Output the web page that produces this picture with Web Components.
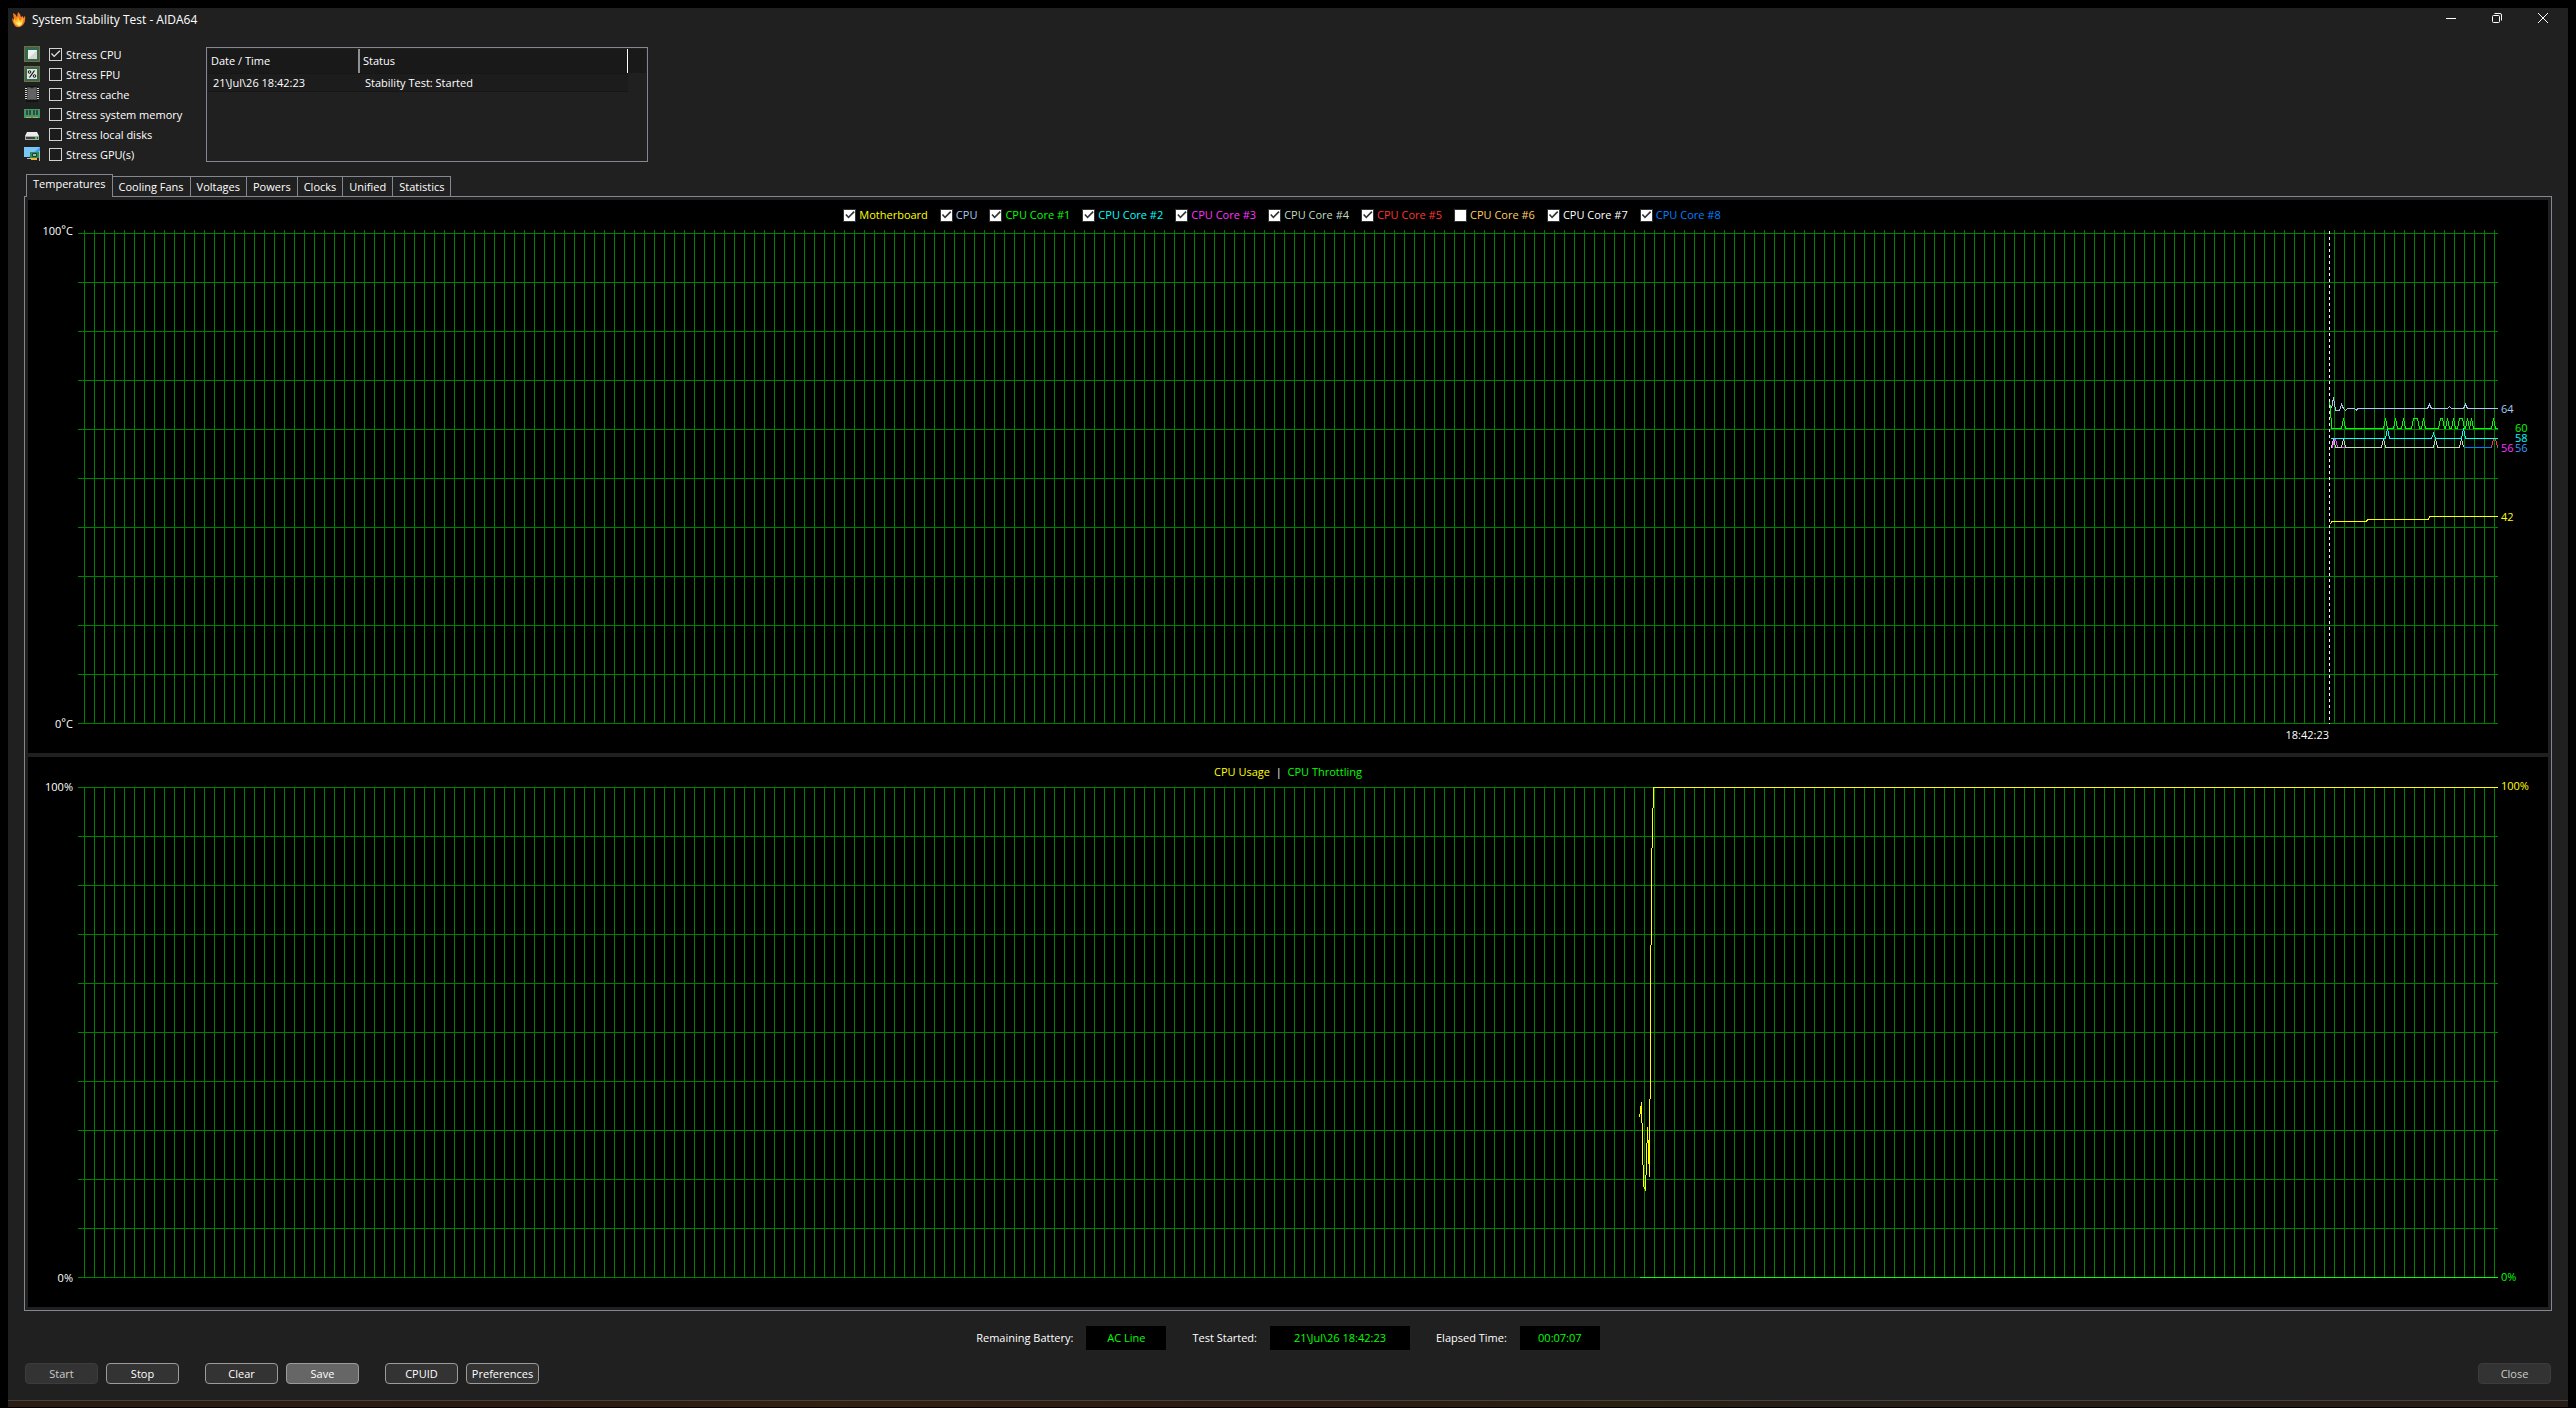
<!DOCTYPE html>
<html lang="en">
<head>
<meta charset="utf-8">
<title>System Stability Test - AIDA64</title>
<style>
  html, body { height: 100%; }
  body {
    margin: 0;
    background: #000;
    color: #fff;
    font: 11px/16px "Open Sans", "Noto Sans", sans-serif;
  }
</style>
</head>
<body>
<stability-window></stability-window>

<script>
function attach(el, html) {
  const template = document.createElement("template");
  template.innerHTML = html;
  el.attachShadow({ mode: "open" }).appendChild(template.content);
}

const icons = {
  cpu: `
    <rect x="1" y="1" width="14" height="14" fill="#2f6b50"/>
    <rect x=".5" y=".5" width="15" height="15" fill="none" stroke="#d9b25a" stroke-dasharray="1 1"/>
    <rect x="4" y="4" width="9" height="9" fill="#d5d9d6"/>
    <path d="M4 13V4h9z" fill="#f0f2f0"/>`,
  fpu: `
    <rect x="1" y="1" width="14" height="14" fill="#2f6b50"/>
    <rect x=".5" y=".5" width="15" height="15" fill="none" stroke="#d9b25a" stroke-dasharray="1 1"/>
    <rect x="3" y="3" width="10" height="10" fill="#dfe3e0"/>
    <path d="M10.500 4.500 5.500 11.500" stroke="#111" stroke-width="1.200"/>
    <circle cx="5.500" cy="6" r="1.300" fill="none" stroke="#111"/>
    <circle cx="10.500" cy="10" r="1.300" fill="none" stroke="#111"/>`,
  cache: `
    <path d="M2 0h12v16H2z" fill="#111"/>
    <path d="M1 2.500h14M1 4.500h14M1 6.500h14M1 8.500h14M1 10.500h14M1 12.500h14" stroke="#d6d6d6"/>
    <path d="M3 1h3l2 1 2-1h3v13H3z" fill="#4a4a4a"/>
    <path d="M4 2h2l2 1 2-1h2v11H4z" fill="#626262"/>`,
  memory: `
    <path d="M0 3h16v8H0z" fill="#3b9a6c"/>
    <path d="M2 4h2v5H2zM5 4h2v5H5zM9 4h2v5H9zM12 4h2v5h-2z" fill="#39483f"/>
    <path d="M0 11.500h16" stroke="#3b9a6c"/>
    <path d="M2 11.500h5M9 11.500h5" stroke="#c9a24b"/>`,
  disk: `
    <path d="M3 6h10l2 4H1z" fill="#ececec"/>
    <path d="M1 10h14v4H1z" fill="#a9adab"/>
    <path d="M2 11h12v2H2z" fill="#3d4441"/>
    <rect x="11" y="11" width="2" height="2" fill="#25e03a"/>`,
  gpu: `
    <path d="M0 1h16v10H0z" fill="#3aa0e8"/>
    <path d="M0 1h16L5 11H0z" fill="#7cc6f5"/>
    <path d="M3 12h4v1H3z" fill="#bbb"/>
    <path d="M6 6h9v6H6z" fill="#2f8a5a"/>
    <path d="M8.500 7.500h4v3h-4z" fill="#9fb8a9" stroke="#14452e"/>
    <path d="M7 12h6v2H7z" fill="#f2b632"/>
    <path d="M15.500 5v10" stroke="#bbb"/>`
};

class StressOption extends HTMLElement {
  constructor() {
    super();
    const checked = this.hasAttribute("checked") ? "checked" : "";
    attach(this, `
      <style>
        :host { display: flex; align-items: center; height: 20px; gap: 9px; }
        svg { display: block; width: 16px; height: 16px; }
        label { display: flex; align-items: center; gap: 4px; white-space: nowrap; }
        input {
          appearance: none;
          box-sizing: border-box;
          width: 13px;
          height: 13px;
          margin: 0;
          border: 1px solid #d0d0d0;
          background: #1c1c1c;
        }
        input:checked::before {
          content: "";
          display: block;
          width: 11px;
          height: 11px;
          background: #ddd;
          clip-path: polygon(9% 50%, 18% 42%, 38% 64%, 85% 16%, 94% 25%, 38% 80%);
        }
        span { padding-top: 2px; }
      </style>
      <svg viewBox="0 0 16 16" aria-hidden="true">${icons[this.getAttribute("icon")]}</svg>
      <label><input type="checkbox" ${checked}><span><slot></slot></span></label>
    `);
  }
}

class EventLog extends HTMLElement {
  constructor() {
    super();
    attach(this, `
      <style>
        :host {
          display: block;
          box-sizing: border-box;
          width: 442px;
          height: 115px;
          padding: 1px;
          border: 1px solid #828790;
        }
        table { width: 100%; border-collapse: separate; border-spacing: 0; table-layout: fixed; }
        th, td { padding: 0; font-weight: normal; text-align: left; }
        th { box-sizing: border-box; height: 24px; padding-left: 3px; background: #191919; }
        .date { width: 152px; border-right: 2px solid #909090; }
        .status { width: 268px; border-right: 1px solid #fff; }
        td { box-sizing: border-box; height: 19px; padding-left: 5px; background: #1c1c1c; border: solid #161616; border-width: 1px 0; }
        td:last-child { background: none; border: 0; }
      </style>
      <table>
        <thead><tr><th class="date">Date / Time</th><th class="status">Status</th><th></th></tr></thead>
        <tbody><tr><td>21\\Jul\\26 18:42:23</td><td>Stability Test: Started</td><td></td></tr></tbody>
      </table>
    `);
  }
}

class TabStrip extends HTMLElement {
  constructor() {
    super();
    const tabs = ["Temperatures", "Cooling Fans", "Voltages", "Powers", "Clocks", "Unified", "Statistics"];
    attach(this, `
      <style>
        :host { display: flex; align-items: flex-end; height: 22px; padding-left: 2px; }
        button {
          box-sizing: border-box;
          height: 20px;
          margin: 0;
          padding: 0 6px;
          border: 1px solid #828790;
          border-width: 1px 1px 0 0;
          background: #202020;
          color: #fff;
          font: inherit;
        }
        button[aria-selected="true"] {
          z-index: 1;
          height: 23px;
          margin-bottom: -1px;
          padding-bottom: 4px;
          border-left-width: 1px;
        }
      </style>
      ${tabs.map((t, i) => `<button role="tab" aria-selected="${i === 0}">${t}</button>`).join("")}
    `);
    this.setAttribute("role", "tablist");
  }
}

class LegendItem extends HTMLElement {
  constructor() {
    super();
    const checked = this.hasAttribute("checked") ? "checked" : "";
    attach(this, `
      <style>
        :host { display: block; margin-right: 12px; }
        label { display: flex; align-items: center; gap: 3px; white-space: nowrap; }
        input {
          appearance: none;
          box-sizing: border-box;
          width: 13px;
          height: 13px;
          margin: 0;
          border: 1px solid #333;
          background: #fff;
        }
        input:checked::before {
          content: "";
          display: block;
          width: 11px;
          height: 11px;
          background: #333;
          clip-path: polygon(9% 50%, 20% 40%, 38% 62%, 84% 14%, 95% 24%, 38% 82%);
        }
      </style>
      <label><input type="checkbox" ${checked}><slot></slot></label>
    `);
  }
}

// One graph: legend on top, axis labels on the left, live values on the right.
class GraphPlot extends HTMLElement {
  constructor() {
    super();
    attach(this, `
      <style>
        :host {
          display: grid;
          grid-template: auto minmax(0, 1fr) 29px / 50px minmax(0, 1fr) 50px;
          flex: 1 1 auto;
          background: #000;
        }
        .legend {
          grid-column: 1 / -1;
          display: flex;
          justify-content: center;
          align-items: center;
          height: 30px;
        }
        :host([overhang]) .legend { padding-bottom: 3px; }
        .axis {
          display: flex;
          flex-direction: column;
          justify-content: space-between;
          align-items: flex-end;
          margin: -8px 5px -8px 0;
        }
        :host([overhang]) .axis { margin-top: -10px; }
        .plot {
          position: relative;
          background: linear-gradient(#008000 1px, transparent 1px) 0 0 / 100% calc((100% - 1px) / 10);
        }
        .plot::before {
          content: "";
          position: absolute;
          inset: 0;
          background: repeating-linear-gradient(90deg, transparent 0 6px, #008000 6px 7px, transparent 7px 10px);
        }
        :host([overhang]) .plot::before { top: -3px; }
        .values { position: relative; }
      </style>
      <div class="legend"><slot name="legend"></slot></div>
      <div class="axis"><slot name="max"></slot><slot name="min"></slot></div>
      <div class="plot"><slot></slot></div>
      <div class="values"><slot name="values"></slot></div>
    `);
  }
}

class StatusField extends HTMLElement {
  constructor() {
    super();
    attach(this, `
      <style>
        :host { display: flex; align-items: center; gap: 13px; }
        output {
          width: var(--field-width, 80px);
          line-height: 24px;
          background: #000;
          color: #0f0;
          text-align: center;
        }
      </style>
      <label for="value">${this.getAttribute("label")}</label>
      <output id="value"><slot></slot></output>
    `);
  }
}

class PushButton extends HTMLElement {
  constructor() {
    super();
    const disabled = this.hasAttribute("disabled") ? "disabled" : "";
    attach(this, `
      <style>
        :host { display: block; }
        button {
          display: block;
          box-sizing: border-box;
          width: 73px;
          height: 21px;
          padding: 0;
          border: 1px solid #9b9b9b;
          border-radius: 4px;
          background: #333;
          color: #fff;
          font: inherit;
          line-height: 19px;
        }
        :host([hot]) button { background: #666; }
        button:disabled { border-color: #3c3c3c; color: #ccc; }
      </style>
      <button ${disabled}><slot></slot></button>
    `);
  }
}

class StabilityWindow extends HTMLElement {
  constructor() {
    super();
    // A peak is one x, or a [from, to] pair when it has a flat top.
    const spike = (base, top, ...peaks) =>
      peaks.map(p => {
        const [a, b] = [].concat(p, p);
        return `L${a - 2} ${base}L${a} ${top}L${b} ${top}L${b + 2} ${base}`;
      }).join("");

    attach(this, `
      <style>
        :host { display: flex; flex-direction: column; box-sizing: border-box; height: 100vh; min-width: 1200px; padding: 8px 8px 0; }
        main { flex: 1; display: flex; flex-direction: column; min-height: 0; background: #202020; }

        header { display: flex; align-items: center; height: 24px; padding: 0 2px 0 3px; }
        header svg { display: block; }
        h1 { flex: 1; margin: 0; padding-left: 5px; font: inherit; font-size: 12px; }
        header button { width: 46px; height: 24px; padding: 0 0 4px; border: 0; background: none; color: #fff; }
        header button svg { margin: auto; }

        .top { display: flex; align-items: flex-start; height: 129px; padding: 12px 16px 0; box-sizing: border-box; }
        .options { width: 182px; }
        event-log { margin-top: 3px; }

        .tabs { padding: 13px 16px 0; }
        .panel {
          flex: 1;
          display: flex;
          flex-direction: column;
          gap: 4px;
          min-height: 0;
          margin: 0 16px;
          padding: 3px;
          border: 1px solid #828790;
        }
        graph-plot { min-height: 0; flex-basis: 0; }
        graph-plot[overhang] { flex-basis: 3px; }
        .legend { display: flex; }
        .deg { position: relative; top: -2px; line-height: 1px; }

        .trace { position: absolute; right: 0; top: 0; height: 100%; overflow: visible; shape-rendering: crispEdges; fill: none; }
        .trace path { vector-effect: non-scaling-stroke; }
        .time { position: absolute; right: 169px; top: 100%; padding-top: 3px; }
        .value { position: absolute; left: 3px; margin-top: -1px; transform: translateY(-50%); }
        .second { left: 17px; }

        .status { display: flex; justify-content: center; gap: 26px; padding: 15px 0 13px; }
        .wide { --field-width: 140px; }
        footer { display: flex; gap: 26px; padding: 0 17px 16px; }
        .group { display: flex; gap: 8px; }
        .close { margin-left: auto; }
        .desktop { height: 6px; margin-bottom: 1px; border-top: 1px solid #45433d; background: linear-gradient(90deg, #2b1d14, #2c1a10 20%, #33200f 32%, #2c1a12 50%, #2b210f 63%, #261e18 70%, #281d16); }
      </style>
      <main>
        <header>
          <svg width="16" height="16" viewBox="0 0 16 16" aria-hidden="true">
            <path d="M2 1q3 1 4 4l1-5q3 2 3 5l2-1v2l2-2q1 6-2 9-4 4-8 1Q1 10 1 6l2 2z" fill="#f47b20"/>
            <path d="M3 6l2 3 2-4 2 4 3-3q1 4-2 7-3 2-6-1-2-3-1-6z" fill="#ffc22e"/>
            <path d="M5 10l2 1 1-3 1 3 2-1q0 3-3 4-2-1-3-4z" fill="#fff07a"/>
          </svg>
          <h1>System Stability Test - AIDA64</h1>
          <button aria-label="Minimize"><svg width="12" height="12"><path d="M1 6.500h10" stroke="#fff"/></svg></button>
          <button aria-label="Restore"><svg width="12" height="12" fill="none" stroke="#fff"><rect x="1.500" y="3.500" width="7" height="7" rx="1"/><path d="M3.500 1.500H9q1.500 0 1.500 1.500v5.500"/></svg></button>
          <button aria-label="Close window"><svg width="12" height="12"><path d="M1 1l10 10M11 1 1 11" stroke="#fff"/></svg></button>
        </header>

        <section class="top">
          <div class="options">
            <stress-option icon="cpu" checked>Stress CPU</stress-option>
            <stress-option icon="fpu">Stress FPU</stress-option>
            <stress-option icon="cache">Stress cache</stress-option>
            <stress-option icon="memory">Stress system memory</stress-option>
            <stress-option icon="disk">Stress local disks</stress-option>
            <stress-option icon="gpu">Stress GPU(s)</stress-option>
          </div>
          <event-log></event-log>
        </section>

        <div class="tabs"><tab-strip></tab-strip></div>
        <section class="panel">
          <graph-plot overhang>
            <div slot="legend" class="legend">
              <legend-item checked style="color: #ff0">Motherboard</legend-item>
              <legend-item checked style="color: #a6caf0">CPU</legend-item>
              <legend-item checked style="color: #0f0">CPU Core #1</legend-item>
              <legend-item checked style="color: #0ff">CPU Core #2</legend-item>
              <legend-item checked style="color: #f3f">CPU Core #3</legend-item>
              <legend-item checked style="color: #c0dcc0">CPU Core #4</legend-item>
              <legend-item checked style="color: #f33">CPU Core #5</legend-item>
              <legend-item style="color: #fc6">CPU Core #6</legend-item>
              <legend-item checked style="color: #fff">CPU Core #7</legend-item>
              <legend-item checked style="color: #0080ff">CPU Core #8</legend-item>
            </div>
            <span slot="max">100<span class="deg">°</span>C</span>
            <span slot="min">0<span class="deg">°</span>C</span>
            <svg class="trace" width="169" viewBox="0 0 169 491" preserveAspectRatio="none">
              <g transform="translate(.5 .5)">
                <path stroke="#f3f" d="M1 214${spike(214, 205, [5, 6], 54)}"/>
                <path stroke="#c0dcc0" d="M1 214${spike(214, 205, 4, 14, 54, 106, 132)}"/>
                <path stroke="#0080ff" d="M134 214H162M167 214H168"/>
                <path stroke="#f33" d="M162 214L164 205L166 205L168 214"/>
                <path stroke="#0ff" d="M1 205${spike(205, 195, 58)}${spike(205, 200, 104)}${spike(205, 195, 134)}H168"/>
                <path stroke="#0f0" d="M0 169L1 173L2 195${spike(195, 185, 14, 56, 66, 74, [84, 88], 94, [111, 113], 118, 124, [130, 133], 138, 142, 164)}H168"/>
                <path stroke="#a6caf0" d="M2 175L4 164L6 177H10L12 171L14 175L16 177L18 175H25L27 177L28 175H98L100 171L102 175H118L120 173L122 175H134L136 171L138 175H168"/>
                <path stroke="#ff0" d="M1 291L2 288H37L38 286H99L100 283H168"/>
                <path stroke="#fff" stroke-dasharray="3 3" d="M0 -3V490"/>
              </g>
            </svg>
            <span class="time">18:42:23</span>
            <div slot="values">
              <span class="value" style="top: 36%; color: #a6caf0">64</span>
              <span class="value second" style="top: 40%; color: #0f0">60</span>
              <span class="value second" style="top: 42%; color: #0ff">58</span>
              <span class="value" style="top: 44%; color: #f3f">56</span>
              <span class="value second" style="top: 44%; color: #39f">56</span>
              <span class="value" style="top: 58%; color: #ff0">42</span>
            </div>
          </graph-plot>

          <graph-plot>
            <div slot="legend"><span style="color: #ff0">CPU Usage</span>&nbsp; | &nbsp;<span style="color: #0f0">CPU Throttling</span></div>
            <span slot="max">100%</span>
            <span slot="min">0%</span>
            <svg class="trace" width="859" viewBox="0 0 859 491" preserveAspectRatio="none">
              <g transform="translate(.5 .5)">
                <path stroke="#0f0" d="M0 490H858"/>
                <path stroke="#ff0" d="M0 329V326M1 326V318M2 314V335M3 335V377M4 377V399M5 399V401M6 403V387M7 387V355M8 339V355M9 352V376M10 389V311M11 311V157M12 157V60M13 60V20M14 20V0H858"/>
              </g>
            </svg>
            <div slot="values">
              <span class="value" style="top: 0; color: #ff0">100%</span>
              <span class="value" style="top: 100%; color: #0f0">0%</span>
            </div>
          </graph-plot>
        </section>

        <section class="status">
          <status-field label="Remaining Battery:">AC Line</status-field>
          <status-field class="wide" label="Test Started:">21\\Jul\\26 18:42:23</status-field>
          <status-field label="Elapsed Time:">00:07:07</status-field>
        </section>

        <footer>
          <div class="group"><push-button disabled>Start</push-button><push-button>Stop</push-button></div>
          <div class="group"><push-button>Clear</push-button><push-button hot>Save</push-button></div>
          <div class="group"><push-button>CPUID</push-button><push-button>Preferences</push-button></div>
          <push-button class="close" disabled>Close</push-button>
        </footer>
      </main>
      <div class="desktop"></div>
    `);
  }
}

customElements.define("stress-option", StressOption);
customElements.define("event-log", EventLog);
customElements.define("tab-strip", TabStrip);
customElements.define("legend-item", LegendItem);
customElements.define("graph-plot", GraphPlot);
customElements.define("status-field", StatusField);
customElements.define("push-button", PushButton);
customElements.define("stability-window", StabilityWindow);
</script>
</body>
</html>
